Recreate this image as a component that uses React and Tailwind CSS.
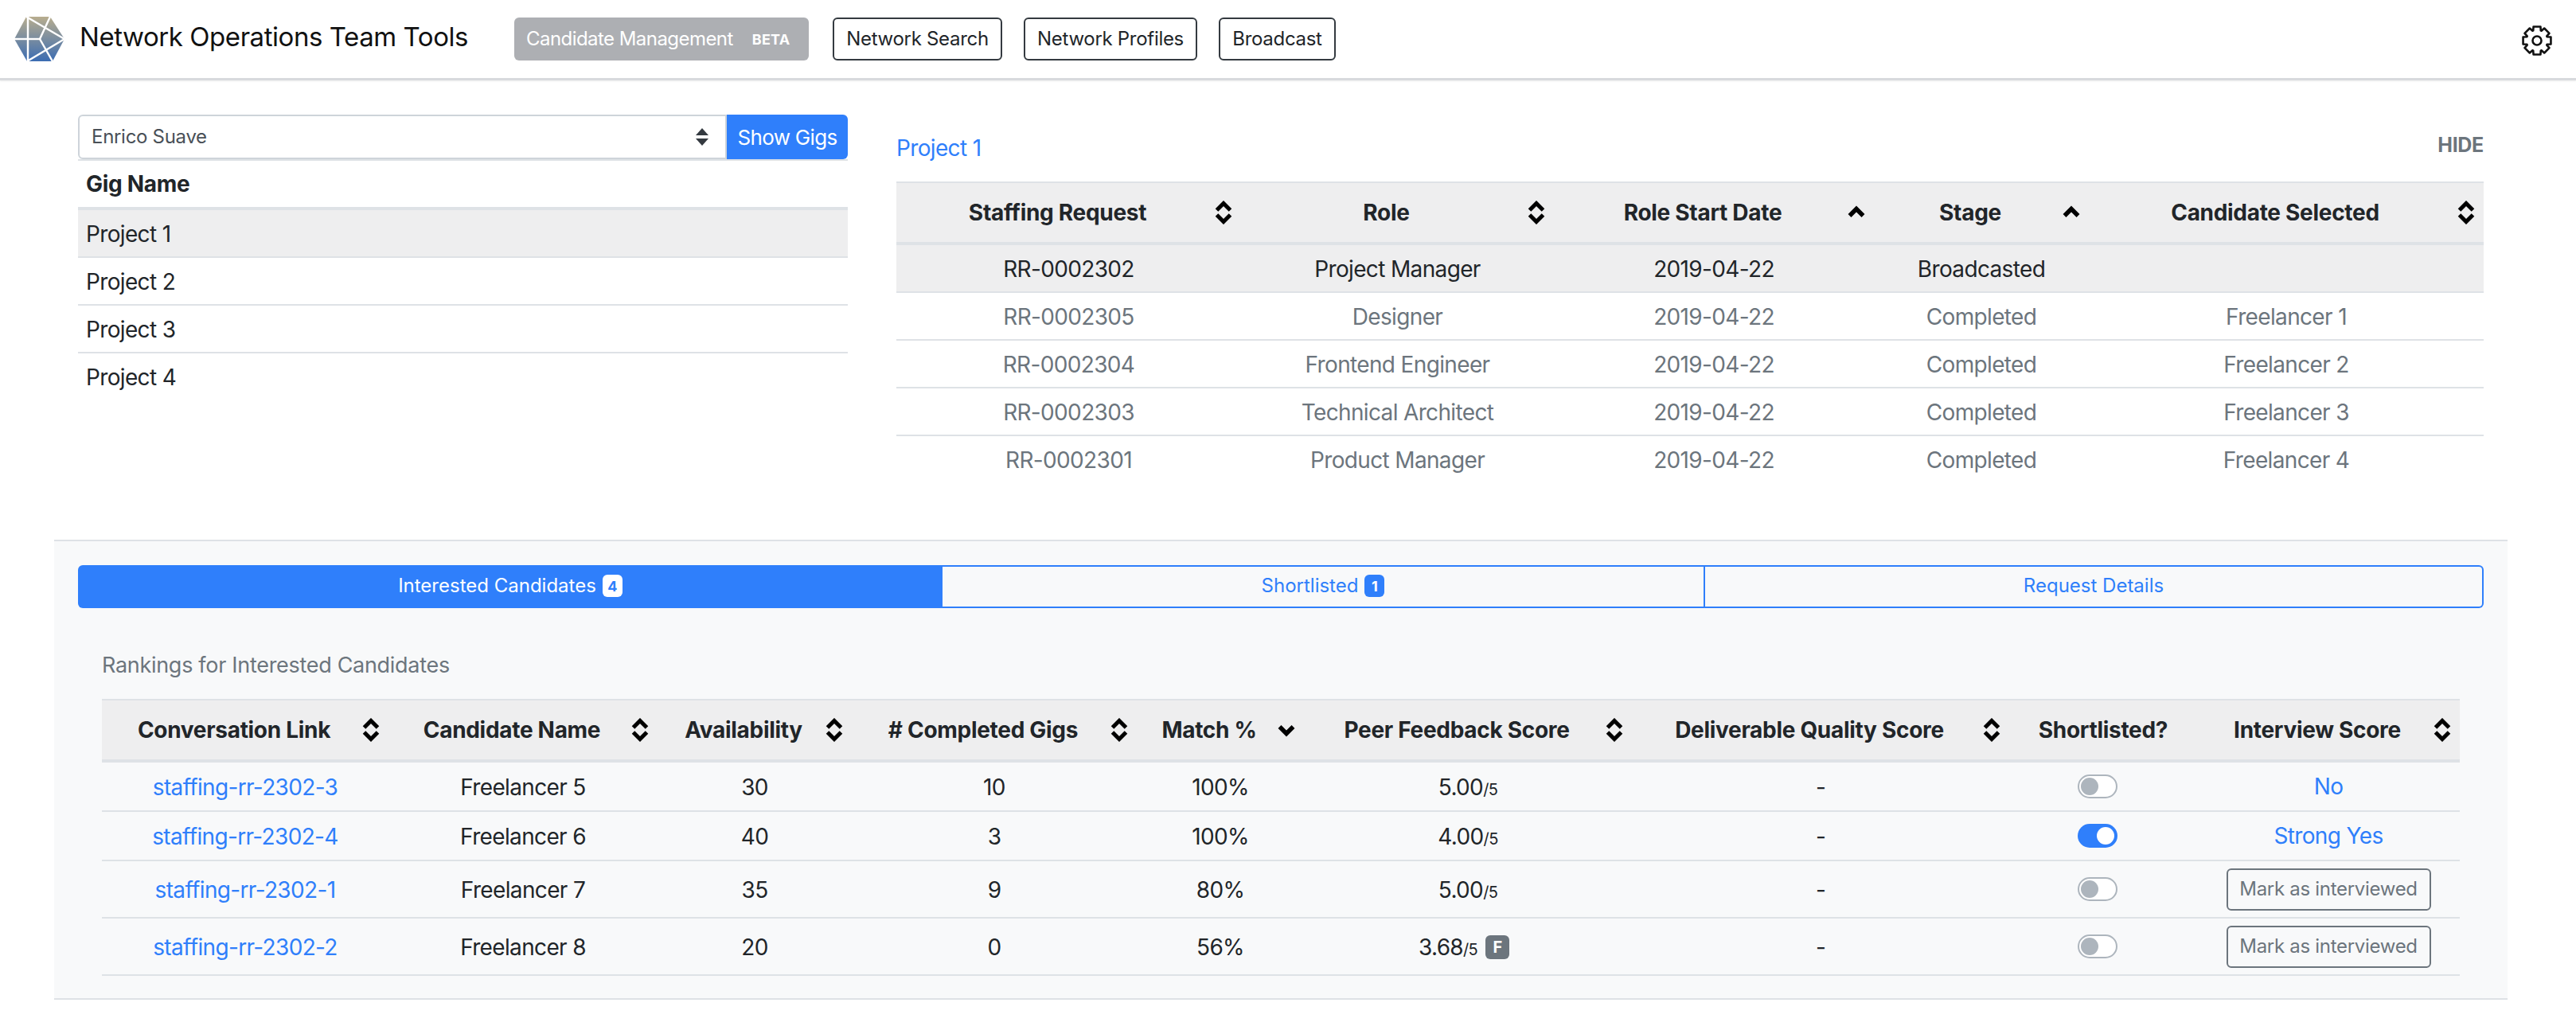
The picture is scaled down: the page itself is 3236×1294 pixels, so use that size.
const SortBoth = () => (
  <svg width="22" height="30" viewBox="0 0 22 30" className="absolute right-[11px] top-1/2 -translate-y-1/2">
    <polyline points="2.5,12 11,3.5 19.5,12" fill="none" stroke="#000" strokeWidth="5" />
    <polyline points="2.5,18 11,26.5 19.5,18" fill="none" stroke="#000" strokeWidth="5" />
  </svg>
);

const SortUp = () => (
  <svg width="24" height="30" viewBox="0 0 22 30" className="absolute right-[10px] top-1/2 -translate-y-1/2">
    <polyline points="2.5,19 11,10.5 19.5,19" fill="none" stroke="#000" strokeWidth="5.5" />
  </svg>
);

const SortDown = () => (
  <svg width="24" height="30" viewBox="0 0 22 30" className="absolute right-[10px] top-1/2 -translate-y-1/2">
    <polyline points="2.5,11 11,19.5 19.5,11" fill="none" stroke="#000" strokeWidth="5.5" />
  </svg>
);

const gearPoints = () => {
  const pts = [];
  for (let i = 0; i < 8; i++) {
    const a = (i * Math.PI) / 4 - Math.PI / 2;
    const p = (r, d) => `${(20 + r * Math.cos(a + d)).toFixed(2)},${(20 + r * Math.sin(a + d)).toFixed(2)}`;
    pts.push(p(13.5, -0.36), p(18, -0.25), p(18, 0.25), p(13.5, 0.36));
  }
  return pts.join(" ");
};

const Gear = () => (
  <svg width="40" height="40" viewBox="0 0 40 40" className="mt-[4px]">
    <polygon points={gearPoints()} fill="none" stroke="#111" strokeWidth="2.6" strokeLinejoin="round" />
    <circle cx="20" cy="20" r="5.5" fill="none" stroke="#111" strokeWidth="2.6" />
  </svg>
);

const Logo = () => (
  <svg width="64" height="56" viewBox="18 22 64 56" className="shrink-0">
    <defs>
      <linearGradient id="logoGrad" x1="0" y1="0" x2="0" y2="1">
        <stop offset="0" stopColor="#b8ad8e" />
        <stop offset="1" stopColor="#3b6cb2" />
      </linearGradient>
    </defs>
    <polygon points="33,22 63,22 81,50 66,78 34,78 18,50" fill="url(#logoGrad)" />
    <g stroke="#fff" strokeWidth="2.4" fill="none">
      <path d="M33,22 L81,50 L34,78" />
      <path d="M35,22 L35,78" />
      <path d="M18,50 L50,50" />
      <path d="M63,22 L50,50 L66,78" />
    </g>
  </svg>
);

const Toggle = ({ on }) =>
  on ? (
    <div className="w-[50px] h-[30px] rounded-full bg-[#2f7ffb] flex items-center justify-end pr-[4px] -translate-x-[7px] mx-auto">
      <div className="w-[22px] h-[22px] rounded-full bg-white" />
    </div>
  ) : (
    <div className="w-[50px] h-[30px] rounded-full bg-white border-2 border-[#adb5bd] flex items-center pl-[2px] -translate-x-[7px] mx-auto">
      <div className="w-[22px] h-[22px] rounded-full bg-[#adb5bd]" />
    </div>
  );

const NavButton = ({ w, children }) => (
  <button className={`${w} h-[54px] border-2 border-[#343a40] rounded-[6px] text-[24px] tracking-[-0.3px] text-[#212529] whitespace-nowrap`}>
    {children}
  </button>
);

const Score = ({ value, flag }) => (
  <span className={`inline-flex items-center ${flag ? "pr-[10px]" : ""}`}>
    <span>
      {value}
      <span className="text-[20px]">/5</span>
    </span>
    {flag && (
      <span className="ml-[10px] w-[30px] h-[30px] rounded-[6px] bg-[#6c757d] text-white text-[20px] font-bold flex items-center justify-center">
        F
      </span>
    )}
  </span>
);

const requestCols = [
  { label: "Staffing Request", w: "w-[433px]", sort: "both" },
  { label: "Role", w: "w-[393px]", sort: "both" },
  { label: "Role Start Date", w: "w-[402px]", sort: "up" },
  { label: "Stage", w: "w-[270px]", sort: "up" },
  { label: "Candidate Selected", w: "w-[496px]", sort: "both" },
];

const requests = [
  ["RR-0002302", "Project Manager", "2019-04-22", "Broadcasted", ""],
  ["RR-0002305", "Designer", "2019-04-22", "Completed", "Freelancer 1"],
  ["RR-0002304", "Frontend Engineer", "2019-04-22", "Completed", "Freelancer 2"],
  ["RR-0002303", "Technical Architect", "2019-04-22", "Completed", "Freelancer 3"],
  ["RR-0002301", "Product Manager", "2019-04-22", "Completed", "Freelancer 4"],
];

const rankCols = [
  { label: "Conversation Link", w: "w-[360px]", sort: "both" },
  { label: "Candidate Name", w: "w-[338px]", sort: "both" },
  { label: "Availability", w: "w-[244px]", sort: "both" },
  { label: "# Completed Gigs", w: "w-[358px]", sort: "both" },
  { label: "Match %", w: "w-[210px]", sort: "down" },
  { label: "Peer Feedback Score", w: "w-[412px]", sort: "both" },
  { label: "Deliverable Quality Score", w: "w-[474px]", sort: "both" },
  { label: "Shortlisted?", w: "w-[236px]" },
  { label: "Interview Score", w: "w-[330px]", sort: "both" },
];

const candidates = [
  { link: "staffing-rr-2302-3", name: "Freelancer 5", avail: 30, gigs: 10, match: "100%", peer: "5.00", on: false, score: "No", h: "h-[62px]" },
  { link: "staffing-rr-2302-4", name: "Freelancer 6", avail: 40, gigs: 3, match: "100%", peer: "4.00", on: true, score: "Strong Yes", h: "h-[62px]" },
  { link: "staffing-rr-2302-1", name: "Freelancer 7", avail: 35, gigs: 9, match: "80%", peer: "5.00", on: false, h: "h-[72px]" },
  { link: "staffing-rr-2302-2", name: "Freelancer 8", avail: 20, gigs: 0, match: "56%", peer: "3.68", flag: true, on: false, h: "h-[72px]" },
];

const HeadCell = ({ col }) => (
  <th className={`${col.w} h-[80px] p-0 bg-[#eeeeef] border-t-2 border-b-4 border-[#dee2e6] font-bold tracking-[-0.3px] text-[#212529] text-center`}>
    <div className={`relative ${col.sort ? "pr-[28px]" : ""}`}>
      <span className="whitespace-nowrap">{col.label}</span>
      {col.sort === "both" && <SortBoth />}
      {col.sort === "up" && <SortUp />}
      {col.sort === "down" && <SortDown />}
    </div>
  </th>
);

export default function App() {
  return (
    <div className="min-h-screen bg-white font-[Inter,sans-serif] text-[28px] tracking-[-0.65px] text-[#212529]">
      {/* navbar */}
      <nav className="h-[101px] flex items-center pl-[18px] pr-[29px] border-b-[3px] border-[#d8dadd] shadow-[0_1px_2px_rgba(0,0,0,0.08)]">
        <Logo />
        <div className="ml-[18px] w-[546px] shrink-0 text-[33px] tracking-[-0.45px] text-[#111] whitespace-nowrap -mt-[4px]">Network Operations Team Tools</div>
        <div className="h-[54px] w-[370px] shrink-0 rounded-[6px] bg-[#adafb3] text-white flex items-center gap-[24px] pl-[15px]">
          <span className="text-[24px] tracking-[-0.55px]">Candidate Management</span>
          <span className="text-[18px] font-bold tracking-[0.2px]">BETA</span>
        </div>
        <div className="ml-[30px] flex gap-[27px]">
          <NavButton w="w-[213px]">Network Search</NavButton>
          <NavButton w="w-[218px]">Network Profiles</NavButton>
          <NavButton w="w-[147px]">Broadcast</NavButton>
        </div>
        <div className="ml-auto">
          <Gear />
        </div>
      </nav>

      {/* gigs and staffing requests */}
      <section className="h-[577px] px-[98px] pt-[43px] flex gap-[61px]">
        <div className="w-[967px] shrink-0">
          <div className="flex h-[56px]">
            <div className="flex-1 border-2 border-[#ced4da] rounded-l-[6px] flex items-center justify-between pl-[15px] pr-[21px] text-[#495057] text-[24px] tracking-[-0.3px]">
              <span>Enrico Suave</span>
              <svg width="16" height="22" viewBox="0 0 16 22">
                <polygon points="8,0 16,9 0,9" fill="#343a40" />
                <polygon points="8,22 16,13 0,13" fill="#343a40" />
              </svg>
            </div>
            <button className="w-[152px] bg-[#2f7ffb] text-white rounded-r-[6px] text-[26px] tracking-[-0.7px]">Show Gigs</button>
          </div>
          <div className="h-[64px] border-t-2 border-b-4 border-[#dee2e6] flex items-center pl-[10px] font-bold tracking-[-0.3px]">Gig Name</div>
          <div className="h-[58px] bg-[#eeeeef] flex items-center pl-[10px] pt-[1px]">Project 1</div>
          {["Project 2", "Project 3", "Project 4"].map((g) => (
            <div key={g} className="h-[60px] border-t-2 border-[#dee2e6] flex items-center pl-[10px] pt-[1px]">
              {g}
            </div>
          ))}
        </div>

        <div className="w-[1994px] shrink-0">
          <div className="h-[84px] flex items-center justify-between">
            <a className="text-[#2f7ffb]">Project 1</a>
            <span className="text-[25px] font-bold tracking-[-0.3px] text-[#6c757d] mb-[6px]">HIDE</span>
          </div>
          <table className="w-[1994px] table-fixed border-separate border-spacing-0 text-center">
            <thead>
              <tr>
                {requestCols.map((c) => (
                  <HeadCell key={c.label} col={c} />
                ))}
              </tr>
            </thead>
            <tbody>
              {requests.map((r, i) => (
                <tr key={r[0]} className={i === 0 ? "h-[58px] bg-[#eeeeef]" : "h-[60px] text-[#6c757d]"}>
                  {r.map((cell, j) => (
                    <td key={j} className={`p-0 pt-[1px] ${i === 0 ? "" : "border-t-2 border-[#dee2e6]"}`}>
                      {cell}
                    </td>
                  ))}
                </tr>
              ))}
            </tbody>
          </table>
        </div>
      </section>

      {/* candidates */}
      <section className="ml-[68px] w-[3082px] h-[578px] bg-[#f8f9fa] border-y-2 border-[#dee2e6] pt-[30px] px-[30px]">
        <div className="flex h-[54px] text-[24px] tracking-normal">
          <div className="w-[1086px] bg-[#2f7ffb] rounded-l-[6px] text-white flex items-center justify-center gap-[8px] pb-[2px]">
            Interested Candidates
            <span className="w-[25px] h-[28px] rounded-[6px] bg-white text-[#2f7ffb] text-[18px] font-bold flex items-center justify-center">4</span>
          </div>
          <div className="w-[958px] border-y-2 border-r-2 border-[#2f7ffb] text-[#2f7ffb] flex items-center justify-center gap-[8px] pb-[2px]">
            Shortlisted
            <span className="w-[25px] h-[28px] rounded-[6px] bg-[#2f7ffb] text-white text-[18px] font-bold flex items-center justify-center">1</span>
          </div>
          <div className="flex-1 border-y-2 border-r-2 border-[#2f7ffb] rounded-r-[6px] text-[#2f7ffb] flex items-center justify-center pb-[2px]">
            Request Details
          </div>
        </div>

        <div className="mx-[30px]">
          <div className="h-[114px] flex items-center pt-[31px] text-[#6c757d] text-[27px] tracking-[-0.3px]">Rankings for Interested Candidates</div>
          <table className="w-[2962px] table-fixed border-separate border-spacing-0 text-center">
            <thead>
              <tr>
                {rankCols.map((c) => (
                  <HeadCell key={c.label} col={c} />
                ))}
              </tr>
            </thead>
            <tbody>
              {candidates.map((c) => (
                <tr key={c.link} className={c.h}>
                  <td className="p-0 pt-[1px] border-b-2 border-[#dee2e6] text-[#2f7ffb]">{c.link}</td>
                  <td className="p-0 pt-[1px] border-b-2 border-[#dee2e6]">{c.name}</td>
                  <td className="p-0 pt-[1px] border-b-2 border-[#dee2e6]">{c.avail}</td>
                  <td className="p-0 pt-[1px] border-b-2 border-[#dee2e6]">{c.gigs}</td>
                  <td className="p-0 pt-[1px] border-b-2 border-[#dee2e6]">{c.match}</td>
                  <td className="p-0 pt-[1px] border-b-2 border-[#dee2e6]">
                    <Score value={c.peer} flag={c.flag} />
                  </td>
                  <td className="p-0 pt-[1px] border-b-2 border-[#dee2e6]">-</td>
                  <td className="p-0 border-b-2 border-[#dee2e6]">
                    <Toggle on={c.on} />
                  </td>
                  <td className="p-0 border-b-2 border-[#dee2e6]">
                    {c.score ? (
                      <span className="text-[#2f7ffb]">{c.score}</span>
                    ) : (
                      <button className="w-[257px] h-[53px] border-2 border-[#6c757d] rounded-[6px] text-[#6c757d] text-[24px] tracking-[-0.3px]">Mark as interviewed</button>
                    )}
                  </td>
                </tr>
              ))}
            </tbody>
          </table>
        </div>
      </section>
    </div>
  );
}
